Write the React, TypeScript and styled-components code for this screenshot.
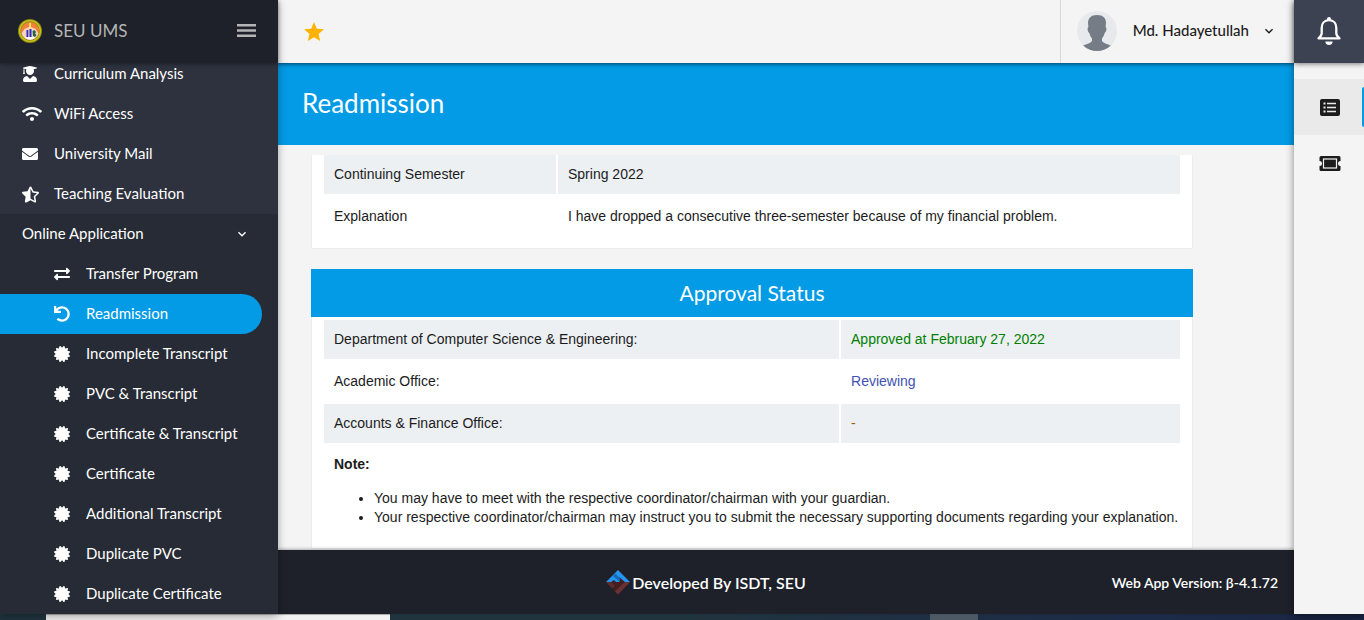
import React from "react";
import styled, { createGlobalStyle, css } from "styled-components";
import { FaUserGraduate, FaWifi, FaEnvelope, FaStarHalfAlt, FaExchangeAlt, FaUndo, FaCertificate } from "react-icons/fa";
import { MdExpandMore, MdStar } from "react-icons/md";

const blue = "#039be5";
const navy = "#1e2129";
const muli = `Lato, "Open Sans", sans-serif`;

const Global = createGlobalStyle`
  * { box-sizing: border-box; }
  body { margin: 0; background: #f4f4f4; font-family: ${muli}; color: #1c1c1c; overflow: hidden; }
  button { font: inherit; color: inherit; border: 0; padding: 0; background: none; cursor: pointer; display: inline-flex; align-items: center; justify-content: center; }
`;

const Screen = styled.div`
  display: flex;
  flex-direction: column;
  height: 100vh;
`;

const Workspace = styled.div`
  display: flex;
  flex: 1;
  min-height: 0;
`;

const Sidebar = styled.aside`
  display: flex;
  flex-direction: column;
  flex: 0 0 278px;
  background: #2d323e;
  color: #fff;
  z-index: 3;
  box-shadow: 0 2px 8px rgba(0, 0, 0, 0.35);
`;

const Brand = styled.header`
  display: flex;
  align-items: center;
  flex: 0 0 63px;
  padding: 0 22px 2px 18px;
  gap: 12px;
  background: ${navy};
  color: #b4b5b6;
  box-shadow: 0 1px 4px rgba(0, 0, 0, 0.4);
  z-index: 1;
`;

const BrandName = styled.span`
  flex: 1;
  font-size: 17px;
`;

const Nav = styled.nav`
  flex: 1;
  min-height: 0;
  overflow: hidden;
`;

const NavList = styled.ul`
  list-style: none;
  margin: 0;
  padding: 0;
`;

const ScrolledList = styled(NavList)`
  margin-top: -9px;
`;

const Group = styled.li`
  background: #272b35;
`;

const rowLayout = css`
  display: flex;
  align-items: center;
  height: 40px;
  font-size: 15px;
  color: #fff;
  text-decoration: none;
`;

const NavLink = styled.a<{ $nested?: boolean; $active?: boolean }>`
  ${rowLayout}
  margin-right: 16px;
  padding-left: ${(p) => (p.$nested ? 54 : 22)}px;
  border-radius: 0 20px 20px 0;
  background: ${(p) => (p.$active ? blue : "transparent")};
`;

const IconSlot = styled.span`
  display: flex;
  flex: 0 0 32px;
`;

const Label = styled.span`
  padding-bottom: 2px;
`;

const GroupToggle = styled.button`
  && {
    ${rowLayout}
    width: 100%;
    justify-content: space-between;
    padding: 0 28px 0 22px;
  }
`;

const Center = styled.div`
  display: flex;
  flex-direction: column;
  flex: 1;
  min-width: 0;
`;

const Toolbar = styled.header`
  display: flex;
  align-items: center;
  justify-content: space-between;
  flex: 0 0 63px;
  padding-left: 24px;
  background: #f4f4f4;
  box-shadow: 0 1px 4px rgba(0, 0, 0, 0.6);
  z-index: 1;
`;

const UserMenu = styled.button`
  && {
    height: 63px;
    padding: 0 17px 2px 16px;
    gap: 12px;
    border-left: 1px solid #d8d8d8;
    font-size: 15px;
    font-weight: 500;
  }
`;

const UserName = styled(Label)`
  padding-left: 4px;
`;

const TitleBar = styled.div`
  display: flex;
  align-items: center;
  flex: 0 0 82px;
  padding: 0 24px 2px;
  background: ${blue};
  color: #fff;
`;

const PageTitle = styled.h1`
  margin: 0;
  font-size: 26px;
  font-weight: 400;
`;

const Content = styled.main`
  flex: 1;
  min-height: 0;
  overflow: hidden;
  margin-top: 10px;
  padding: 0 101px 0 33px;
  font-family: "Liberation Sans", Arial, sans-serif;
  font-size: 14px;
`;

const Card = styled.section`
  margin: 0 0 20px;
  padding: 0 12px 9px;
  background: #fff;
  border: solid #ececec;
  border-width: 0 1px 1px;
`;

const StatusCard = styled(Card)`
  padding-top: 3px;
`;

const CardTitle = styled.h2`
  margin: 0;
  background: ${blue};
  color: #fff;
  font: 400 21px/48px ${muli};
  text-align: center;
`;

const DataTable = styled.table<{ $label: string }>`
  width: 100%;
  border-collapse: separate;
  border-spacing: 0;
  table-layout: fixed;

  th, td {
    height: 42px;
    padding: 0 10px 2px;
    border-bottom: 3px solid #fff;
    text-align: left;
    font-weight: 400;
  }
  th { width: ${(p) => p.$label}; border-right: 2px solid #fff; }
  tr:nth-child(odd) > * { background: #ecf0f3; }
`;

const Status = styled.td<{ $tone: string }>`
  color: ${(p) => p.$tone};
`;

const Note = styled.p`
  margin: 0;
  padding: 9px 10px 0;
  font-weight: 700;
  line-height: 18px;
`;

const NoteList = styled.ul`
  margin: 16px 0 0 10px;
  padding: 0 0 12px 40px;
  line-height: 19px;
  white-space: nowrap;
`;

const Footer = styled.footer`
  display: grid;
  grid-template-columns: 1fr auto 1fr;
  align-items: center;
  flex: 0 0 64px;
  padding: 0 16px;
  background: ${navy};
  color: #fff;
  font-weight: 600;
  box-shadow: 0 -1px 3px rgba(0, 0, 0, 0.3);
  z-index: 1;
`;

const Credit = styled.span`
  display: flex;
  align-items: center;
  grid-column: 2;
  gap: 2px;
  margin-right: 160px;
  font-size: 16px;
`;

const Version = styled.span`
  justify-self: end;
  font-size: 14px;
`;

const Rail = styled.aside`
  display: flex;
  flex-direction: column;
  flex: 0 0 70px;
  background: #f4f4f4;
  z-index: 2;
  box-shadow: 0 2px 8px rgba(0, 0, 0, 0.45);
`;

const BellButton = styled.button`
  && {
    height: 63px;
    margin-bottom: 16px;
    padding-bottom: 2px;
    background: #3c4252;
    color: #fff;
    box-shadow: 0 1px 5px rgba(0, 0, 0, 0.5);
  }
`;

const RailButton = styled.button<{ $active?: boolean }>`
  && {
    position: relative;
    height: 56px;
    padding-left: 2px;
    background: ${(p) => (p.$active ? "#eaeaea" : "transparent")};
  }
  &::after {
    content: "";
    display: ${(p) => (p.$active ? "block" : "none")};
    position: absolute;
    right: 0;
    top: 8px;
    width: 2px;
    height: 40px;
    border-radius: 2px 0 0 2px;
    background: ${blue};
  }
`;

const Taskbar = styled.div`
  display: flex;
  flex: 0 0 6px;
  padding-left: 46px;
  background: linear-gradient(90deg, #20343e, #20343e 50%, #1c2b48 85%, #1a2442);
`;

const SearchStrip = styled.div`
  width: 344px;
  background: #f2f2f2;
  border-top: 1px solid #b5b5b5;
`;

const TaskStrip = styled.div`
  width: 48px;
  margin-left: 540px;
  background: #4e5966;
`;

const Seal = () => (
  <svg width="24" height="24" viewBox="0 0 24 24" aria-hidden="true">
    <circle cx="12" cy="12" r="12" fill="#8d8a14" />
    <circle cx="12" cy="12" r="10.4" fill="none" stroke="#c9c01c" strokeWidth="1.4" />
    <circle cx="12" cy="12" r="9" fill="#f4813a" />
    <path d="M3.500 14.500a9 9 0 0 0 17 0L17.500 10 12 7.500 6.500 10z" fill="#fad3c0" />
    <path d="M7 19a9 9 0 0 0 10 0l-1-1H8z" fill="#fff" />
    <path d="M11.200 4h1.800v6h-1.800z" fill="#ffe66b" />
    <path d="M8.500 11h1.800v7H8.500zM11.500 10h2v8h-2z" fill="#2a2ac4" />
    <path d="M14.500 12l2-1 1.500 2-1 1.500 1.500 1.500-1.500 2-2-1z" fill="#1f6a43" />
  </svg>
);

const MenuBars = () => (
  <svg width="19" height="13" viewBox="0 0 19 13" fill="currentColor" aria-hidden="true">
    <path d="M0 0h19v2.400H0zM0 5.300h19v2.400H0zM0 10.600h19V13H0z" />
  </svg>
);

const Bell = () => (
  <svg width="26" height="28" viewBox="0 0 26 28" aria-hidden="true">
    <path
      d="M13 3.200c-4.800 0-7.300 3.400-7.300 7.600v5.400c0 2-1.200 3.600-3.200 5.200h21c-2-1.600-3.200-3.200-3.200-5.200v-5.400c0-4.200-2.500-7.600-7.300-7.600z"
      fill="none"
      stroke="currentColor"
      strokeWidth="2.300"
      strokeLinejoin="round"
    />
    <circle cx="13" cy="2" r="2" fill="currentColor" />
    <path d="M9.400 24.500h7.200a3.600 3.400 0 0 1-7.200 0z" fill="currentColor" />
  </svg>
);

const IsdtLogo = () => (
  <svg width="24" height="25" viewBox="0 0 24 25" aria-hidden="true">
    <path d="M0 12L12 0l12 12-12 12.500z" fill="#43201f" />
    <path d="M0 12L12 0l12 12h-5l-6-5v5h-3L8 10l-3 2z" fill="#2196f3" />
    <path d="M9 3.500l5 4.500v4L7 6z" fill="#1769b8" />
    <path d="M0 12h5l4 4-3 2.500z" fill="#5d2c30" />
    <path d="M19 12h5L12 24.500 9 21.500z" fill="#6b3033" />
  </svg>
);

const Avatar = () => (
  <svg width="40" height="40" viewBox="0 0 40 40" aria-hidden="true">
    <clipPath id="avatar"><circle cx="20" cy="20" r="20" /></clipPath>
    <g clipPath="url(#avatar)">
      <path d="M0 0h40v40H0z" fill="#e7e9ed" />
      <path d="M20 4c6 0 9 3 9 8l-.4 4c1.500 1 .8 5-1 6-.6 3-1.600 4-2.600 5.500V30c2 3 7 3 11 6v4H4v-4c4-3 9-3 11-6v-2.500c-1-1.500-2-2.500-2.600-5.500-1.800-1-2.500-5-1-6L11 12c0-5 3-8 9-8z" fill="#757c85" />
    </g>
  </svg>
);

const ListBox = () => (
  <svg width="20" height="17" viewBox="0 0 20 17" aria-hidden="true">
    <rect width="20" height="17" rx="2" fill="#1c1c1c" />
    <path d="M3.500 3.500h2v2h-2zM7 3.800h9v1.400H7zM3.500 7.500h2v2h-2zM7 7.800h9v1.400H7zM3.500 11.500h2v2h-2zM7 11.800h9v1.400H7z" fill="#eaeaea" />
  </svg>
);

const Ticket = () => (
  <svg width="22" height="15" viewBox="0 0 22 15" aria-hidden="true">
    <path d="M2 0h18q1.500 0 1.500 1.500V5a2.500 2.500 0 0 0 0 5v3.500q0 1.500-1.500 1.500H2Q.5 15 .5 13.500V10a2.500 2.500 0 0 0 0-5V1.500Q.5 0 2 0z" fill="#1c1c1c" />
    <rect x="4.500" y="3" width="13" height="9" fill="none" stroke="#f4f4f4" strokeWidth="1.200" />
  </svg>
);

const topLinks = [
  { label: "Curriculum Analysis", icon: <FaUserGraduate size={16} /> },
  { label: "WiFi Access", icon: <FaWifi size={20} /> },
  { label: "University Mail", icon: <FaEnvelope size={16} /> },
  { label: "Teaching Evaluation", icon: <FaStarHalfAlt size={17} /> },
];

const applications = [
  "Transfer Program",
  "Readmission",
  "Incomplete Transcript",
  "PVC & Transcript",
  "Certificate & Transcript",
  "Certificate",
  "Additional Transcript",
  "Duplicate PVC",
  "Duplicate Certificate",
];

const applicationIcon = (label: string) => {
  if (label === "Transfer Program") return <FaExchangeAlt size={16} />;
  if (label === "Readmission") return <FaUndo size={16} />;
  return <FaCertificate size={16} />;
};

export default function App() {
  return (
    <Screen>
      <Global />
      <Workspace>
        <Sidebar>
          <Brand>
            <Seal />
            <BrandName>SEU UMS</BrandName>
            <button aria-label="Toggle menu"><MenuBars /></button>
          </Brand>
          <Nav>
            <ScrolledList>
              {topLinks.map(({ label, icon }) => (
                <li key={label}>
                  <NavLink href="#"><IconSlot>{icon}</IconSlot><Label>{label}</Label></NavLink>
                </li>
              ))}
              <Group>
                <GroupToggle><Label>Online Application</Label><MdExpandMore size={16} /></GroupToggle>
                <NavList>
                  {applications.map((label) => (
                    <li key={label}>
                      <NavLink href="#" $nested $active={label === "Readmission"}>
                        <IconSlot>{applicationIcon(label)}</IconSlot><Label>{label}</Label>
                      </NavLink>
                    </li>
                  ))}
                </NavList>
              </Group>
            </ScrolledList>
          </Nav>
        </Sidebar>

        <Center>
          <Toolbar>
            <button aria-label="Favourites"><MdStar size={24} color="#ffb300" /></button>
            <UserMenu>
              <Avatar />
              <UserName>Md. Hadayetullah</UserName>
              <MdExpandMore size={16} />
            </UserMenu>
          </Toolbar>
          <TitleBar><PageTitle>Readmission</PageTitle></TitleBar>
          <Content>
            <Card>
              <DataTable $label="234px">
                <tbody>
                  <tr><th scope="row">Continuing Semester</th><td>Spring 2022</td></tr>
                  <tr><th scope="row">Explanation</th><td>I have dropped a consecutive three-semester because of my financial problem.</td></tr>
                </tbody>
              </DataTable>
            </Card>
            <CardTitle>Approval Status</CardTitle>
            <StatusCard>
              <DataTable $label="60.4%">
                <tbody>
                  <tr><th scope="row">Department of Computer Science &amp; Engineering:</th><Status $tone="#008000">Approved at February 27, 2022</Status></tr>
                  <tr><th scope="row">Academic Office:</th><Status $tone="#3f51b5">Reviewing</Status></tr>
                  <tr><th scope="row">Accounts &amp; Finance Office:</th><Status $tone="#a05a00">-</Status></tr>
                </tbody>
              </DataTable>
              <Note>Note:</Note>
              <NoteList>
                <li>You may have to meet with the respective coordinator/chairman with your guardian.</li>
                <li>Your respective coordinator/chairman may instruct you to submit the necessary supporting documents regarding your explanation.</li>
              </NoteList>
            </StatusCard>
          </Content>
          <Footer>
            <Credit><IsdtLogo />Developed By ISDT, SEU</Credit>
            <Version>Web App Version: β-4.1.72</Version>
          </Footer>
        </Center>

        <Rail>
          <BellButton aria-label="Notifications"><Bell /></BellButton>
          <RailButton $active aria-label="Lists"><ListBox /></RailButton>
          <RailButton aria-label="Tickets"><Ticket /></RailButton>
        </Rail>
      </Workspace>
      <Taskbar><SearchStrip /><TaskStrip /></Taskbar>
    </Screen>
  );
}
